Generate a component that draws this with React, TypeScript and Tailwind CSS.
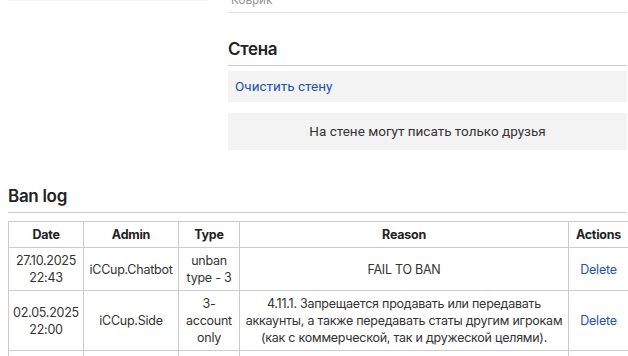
import React from "react";

type BanRow = {
  date: string[];
  admin: string;
  type: string[];
  reason: string[];
};

const rows: BanRow[] = [
  {
    date: ["27.10.2025", "22:43"],
    admin: "iCCup.Chatbot",
    type: ["unban", "type - 3"],
    reason: ["FAIL TO BAN"],
  },
  {
    date: ["02.05.2025", "22:00"],
    admin: "iCCup.Side",
    type: ["3-", "account", "only"],
    reason: [
      "4.11.1. Запрещается продавать или передавать",
      "аккаунты, а также передавать статы другим игрокам",
      "(как с коммерческой, так и дружеской целями).",
    ],
  },
  {
    date: ["01.05.2025", "18:12"],
    admin: "iCCup.Side",
    type: ["3-", "account", "only"],
    reason: ["—"],
  },
];

const cell = "border border-[#cccccc] px-1 py-1 text-center align-middle";

const App: React.FC = () => {
  return (
    <div className="h-[356px] w-[628px] overflow-hidden bg-white text-[#333333]">
      <div className="-mt-[14px] flex gap-5 pl-2 pr-px">
        <div className="w-[200px] shrink-0">
          <div className="h-[15px] bg-[#f4f4f4]"></div>
        </div>

        <div className="min-w-0 flex-1">
          <div className="h-[27px] border-b border-[#e2e2e2] pl-[3px] pt-[6px] font-['Roboto',sans-serif] text-[12px] leading-[16px] text-[#999999]">
            Коврик
          </div>

          <h2 className="mt-[24px] border-b border-[#cccccc] pb-1 font-['Inter',sans-serif] text-[17px] font-semibold leading-[24px] tracking-[-0.3px] text-[#222222]">
            Стена
          </h2>

          <div className="mt-[5px] flex h-[31px] items-center bg-[#f3f3f3] px-[7px] font-['Roboto',sans-serif] text-[13.5px] text-[#1f50b5]">
            <a href="#">Очистить стену</a>
          </div>

          <div className="mt-[11px] flex h-[37px] items-center justify-center bg-[#f3f3f3] font-['Roboto',sans-serif] text-[13.5px] text-[#333333]">
            На стене могут писать только друзья
          </div>
        </div>
      </div>

      <div className="mt-[34px] pl-2 pr-px">
        <h2 className="border-b border-[#cccccc] pb-1 font-['Inter',sans-serif] text-[17px] font-semibold leading-[24px] tracking-[-0.3px] text-[#222222]">
          Ban log
        </h2>

        <table className="mt-2 w-[620px] table-fixed border-collapse font-['Inter',sans-serif] text-[12.5px] leading-[17px] tracking-[-0.25px] text-[#333333]">
          <colgroup>
            <col className="w-[75px]" />
            <col className="w-[95px]" />
            <col className="w-[61px]" />
            <col className="w-[329px]" />
            <col className="w-[60px]" />
          </colgroup>
          <thead>
            <tr className="font-semibold text-[#222222]">
              <th className={cell}>Date</th>
              <th className={cell}>Admin</th>
              <th className={cell}>Type</th>
              <th className={cell}>Reason</th>
              <th className={cell}>Actions</th>
            </tr>
          </thead>
          <tbody>
            {rows.map((r, i) => (
              <tr key={i}>
                <td className={cell}>
                  {r.date.map((d) => (
                    <div key={d} className="whitespace-nowrap">{d}</div>
                  ))}
                </td>
                <td className={`${cell} whitespace-nowrap`}>{r.admin}</td>
                <td className={cell}>
                  {r.type.map((t) => (
                    <div key={t} className="whitespace-nowrap">{t}</div>
                  ))}
                </td>
                <td className={cell}>
                  {r.reason.map((t) => (
                    <div key={t} className="whitespace-nowrap">{t}</div>
                  ))}
                </td>
                <td className={cell}>
                  <a href="#" className="text-[#1f50b5]">
                    Delete
                  </a>
                </td>
              </tr>
            ))}
          </tbody>
        </table>
      </div>
    </div>
  );
};

export default App;
